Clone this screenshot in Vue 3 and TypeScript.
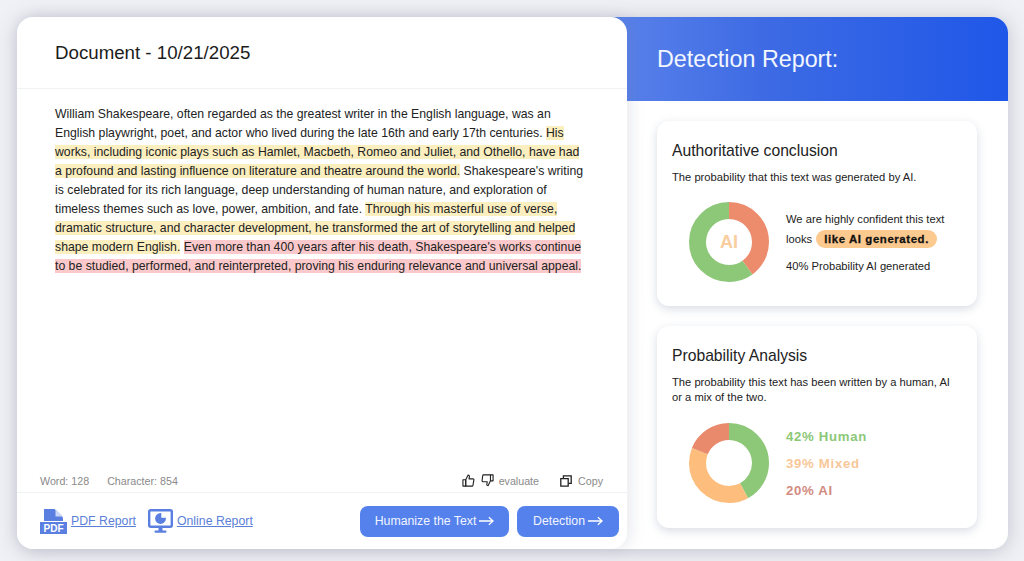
<script setup lang="ts">
import { computed } from "vue";

const radius = 31.5;
const circumference = 2 * Math.PI * radius;

const conclusionParts = [
  { color: "#ec8c6c", value: 40 },
  { color: "#8cc878", value: 60 },
];

const analysisParts = [
  { color: "#8cc878", value: 42 },
  { color: "#fdbd7c", value: 39 },
  { color: "#e98a6c", value: 19 },
];

const legend = [
  { label: "42% Human", color: "#8cc878" },
  { label: "39% Mixed", color: "#f8c798" },
  { label: "20% AI", color: "#d28b80" },
];

function toSegments(parts: { color: string; value: number }[]) {
  let used = 0;
  return parts.map((part) => {
    const length = (part.value / 100) * circumference;
    const segment = {
      color: part.color,
      dash: `${length} ${circumference - length}`,
      offset: -used,
    };
    used += length;
    return segment;
  });
}

const conclusionSegments = computed(() => toSegments(conclusionParts));
const analysisSegments = computed(() => toSegments(analysisParts));
</script>

<template>
  <div class="page">
    <div class="shell">
      <section class="document">
        <header class="doc-head">Document - 10/21/2025</header>
        <div class="doc-body">
          <p>
            William Shakespeare, often regarded as the greatest writer in the English language, was an English playwright, poet, and actor who lived during the late 16th and early 17th centuries.
            <span class="mark-yellow">His works, including iconic plays such as Hamlet, Macbeth, Romeo and Juliet, and Othello, have had a profound and lasting influence on literature and theatre around the world.</span>
            Shakespeare's writing is celebrated for its rich language, deep understanding of human nature, and exploration of timeless themes such as love, power, ambition, and fate.
            <span class="mark-yellow">Through his masterful use of verse, dramatic structure, and character development, he transformed the art of storytelling and helped shape modern English.</span>{{ " " }}<span class="mark-red">Even more than 400 years after his death, Shakespeare's works continue to be studied, performed, and reinterpreted, proving his enduring relevance and universal appeal.</span>
          </p>
        </div>
        <div class="doc-stats">
          <div class="counts">
            <span>Word: 128</span>
            <span>Character: 854</span>
          </div>
          <div class="actions">
            <svg viewBox="0 0 14 14" width="13" height="13" fill="none" stroke="#222" stroke-width="1.2" stroke-linejoin="round">
              <path d="M4 6.2 6.6 1.2c1 0 1.6.7 1.4 1.7L7.6 5.2h4.2c.7 0 1.1.6 1 1.2l-1 5.8c-.1.5-.5.8-1 .8H4z" />
              <path d="M1 6.2h3V13H1z" />
            </svg>
            <svg class="thumb-down" viewBox="0 0 14 14" width="13" height="13" fill="none" stroke="#222" stroke-width="1.2" stroke-linejoin="round">
              <path d="M2.6 1h7.6v6.4L7.6 12.6c-1 0-1.5-.7-1.3-1.6l.4-2.6H2.4c-.8 0-1.4-.6-1.2-1.3l.6-5.2c.1-.5.4-.9.8-.9z" />
              <path d="M10.2 1H13v6.4h-2.8" />
            </svg>
            <span class="evaluate">evaluate</span>
            <svg class="copy-icon" viewBox="0 0 12 12" width="12" height="12" fill="none" stroke="#222" stroke-width="1.3">
              <path d="M.8 3.6h7.4V11.2H.8z" />
              <path d="M3.4 3.4V.8h7.8v7.6H8.4" />
            </svg>
            <span>Copy</span>
          </div>
        </div>
        <footer class="doc-foot">
          <div class="links">
            <a class="report-link">
              <svg viewBox="0 0 27 26" width="27" height="26">
                <path d="M4 1h10.5L23 9.5V13H4z" fill="#5b7fe0" />
                <path d="M15.5 1 23 8.5h-7.5z" fill="#c9d6f5" />
                <rect x="0" y="14" width="27" height="12" fill="#5b7fe0" />
                <text x="13.5" y="24" text-anchor="middle" class="pdf-text">PDF</text>
              </svg>
              <span>PDF Report</span>
            </a>
            <a class="report-link">
              <svg viewBox="0 0 25 24" width="25" height="24">
                <rect x="1.2" y="1.2" width="22.6" height="16.6" rx="1.5" fill="none" stroke="#5b7fe0" stroke-width="2.4" />
                <circle cx="12.5" cy="9.5" r="5.4" fill="#5b7fe0" />
                <path d="M13.3 8.7V3.9a5 5 0 0 1 4.8 4.8z" fill="#fff" />
                <rect x="10.5" y="19" width="4" height="3" fill="#5b7fe0" />
                <rect x="6.5" y="21.6" width="12" height="2.2" rx="1" fill="#5b7fe0" />
              </svg>
              <span>Online Report</span>
            </a>
          </div>
          <div class="buttons">
            <button class="cta humanize">
              Humanize the Text
              <svg viewBox="0 0 16 10" width="15" height="10" fill="none" stroke="#fff" stroke-width="1.4"><path d="M0 5h15M10.5 1 15 5l-4.5 4" /></svg>
            </button>
            <button class="cta detection">
              Detection
              <svg viewBox="0 0 16 10" width="15" height="10" fill="none" stroke="#fff" stroke-width="1.4"><path d="M0 5h15M10.5 1 15 5l-4.5 4" /></svg>
            </button>
          </div>
        </footer>
      </section>

      <aside class="report">
        <header class="report-head">Detection Report:</header>
        <div class="report-body">
          <article class="card card-conclusion">
            <h2>Authoritative conclusion</h2>
            <p class="card-desc">The probability that this text was generated by AI.</p>
            <div class="card-row">
              <div class="donut">
                <svg viewBox="0 0 80 80" width="80" height="80">
                  <circle
                    v-for="seg in conclusionSegments"
                    :key="seg.color"
                    cx="40"
                    cy="40"
                    :r="radius"
                    fill="none"
                    :stroke="seg.color"
                    stroke-width="17"
                    :stroke-dasharray="seg.dash"
                    :stroke-dashoffset="seg.offset"
                    transform="rotate(-90 40 40)"
                  />
                </svg>
                <span class="donut-label">AI</span>
              </div>
              <div class="verdict">
                <p>We are highly confident this text</p>
                <p class="verdict-looks">looks <span class="pill">like AI generated.</span></p>
                <p class="verdict-prob">40% Probability AI generated</p>
              </div>
            </div>
          </article>

          <article class="card card-analysis">
            <h2>Probability Analysis</h2>
            <p class="card-desc">The probability this text has been written by a human, AI or a mix of the two.</p>
            <div class="card-row">
              <div class="donut">
                <svg viewBox="0 0 80 80" width="80" height="80">
                  <circle
                    v-for="seg in analysisSegments"
                    :key="seg.color"
                    cx="40"
                    cy="40"
                    :r="radius"
                    fill="none"
                    :stroke="seg.color"
                    stroke-width="17"
                    :stroke-dasharray="seg.dash"
                    :stroke-dashoffset="seg.offset"
                    transform="rotate(-90 40 40)"
                  />
                </svg>
              </div>
              <ul class="legend">
                <li v-for="item in legend" :key="item.label" :style="{ color: item.color }">{{ item.label }}</li>
              </ul>
            </div>
          </article>
        </div>
      </aside>
    </div>
  </div>
</template>

<style>
html,
body {
  margin: 0;
  background: #eef0f6;
}
</style>

<style scoped>
.page {
  box-sizing: border-box;
  width: 1024px;
  height: 561px;
  padding: 17px 16px 12px 17px;
  background: #f0f1f6;
  font-family: "Liberation Sans", Arial, sans-serif;
  color: #222;
  overflow: hidden;
}

.shell {
  display: flex;
  height: 532px;
  border-radius: 16px;
  background: #fff;
  box-shadow: 0 2px 20px rgba(100, 105, 125, 0.34);
}

.document {
  position: relative;
  z-index: 1;
  display: flex;
  flex-direction: column;
  width: 610px;
  flex: none;
  background: #fff;
  border-radius: 16px;
  box-shadow: 5px 0 14px rgba(110, 120, 150, 0.14);
}

.doc-head {
  height: 72px;
  box-sizing: border-box;
  padding: 26px 38px 0;
  font-size: 18.7px;
  line-height: 20px;
  color: #1c1c1c;
  border-bottom: 1px solid #f1f2f5;
}

.doc-body {
  flex: 1;
  padding: 16px 42px 0 38px;
}

.doc-body p {
  margin: 0;
  font-size: 12.25px;
  line-height: 19px;
  color: #222;
}

.mark-yellow {
  background: #fbeebf;
}

.mark-red {
  background: #fbc9cb;
}

.doc-stats {
  display: flex;
  justify-content: space-between;
  align-items: center;
  height: 25px;
  padding: 1px 24px 0 23px;
  box-sizing: border-box;
  font-size: 10.7px;
  color: #8a8a8a;
  border-bottom: 1px solid #f1f2f5;
}

.counts {
  display: flex;
  gap: 18px;
}

.actions {
  display: flex;
  align-items: center;
}

.thumb-down {
  margin-left: 6px;
}

.evaluate {
  margin-left: 5px;
  margin-right: 21px;
}

.copy-icon {
  margin-right: 6px;
}

.doc-foot {
  display: flex;
  justify-content: space-between;
  align-items: center;
  height: 56px;
  padding: 0 8px 0 23px;
}

.links {
  display: flex;
  align-items: center;
  gap: 12px;
}

.report-link {
  display: flex;
  align-items: center;
  gap: 4px;
  font-size: 12.3px;
  color: #5b7fd8;
}

.report-link span {
  text-decoration: underline;
}

.pdf-text {
  font-family: "Liberation Sans", Arial, sans-serif;
  font-size: 10px;
  font-weight: 700;
  fill: #fff;
}

.buttons {
  display: flex;
  gap: 8px;
}

.cta {
  display: flex;
  align-items: center;
  justify-content: center;
  gap: 3px;
  height: 31px;
  padding: 0;
  border: none;
  border-radius: 8px;
  background: #5581ec;
  color: #f2f5ff;
  font-family: inherit;
  font-size: 12.3px;
}

.humanize {
  width: 149px;
}

.detection {
  width: 102px;
}

.report {
  display: flex;
  flex-direction: column;
  flex: 1;
  min-width: 0;
  margin-left: -16px;
}

.report-head {
  box-sizing: border-box;
  height: 84px;
  padding: 28px 30px 0 46px;
  font-size: 23.3px;
  line-height: 28px;
  color: #f2f6ff;
  background: linear-gradient(90deg, #5a82ea 0%, #3e6be4 38%, #1f57e8 100%);
  border-radius: 0 16px 0 0;
}

.report-body {
  display: flex;
  flex-direction: column;
  gap: 20px;
  padding: 20px 31px 0 46px;
}

.card {
  box-sizing: border-box;
  padding: 21px 15px 0;
  border-radius: 12px;
  background: #fff;
  box-shadow: 0 3px 10px rgba(120, 130, 160, 0.28);
}

.card-conclusion {
  height: 185px;
}

.card-analysis {
  height: 202px;
}

.card h2 {
  margin: 0;
  font-size: 15.7px;
  font-weight: 400;
  line-height: 18px;
  color: #222;
}

.card-desc {
  margin: 10px 0 0;
  font-size: 11.2px;
  line-height: 15px;
  color: #222;
}

.card-row {
  display: flex;
  align-items: center;
  gap: 17px;
  margin-top: 17px;
  padding-left: 17px;
}

.card-analysis .card-row {
  margin-top: 18px;
}

.donut {
  position: relative;
  width: 80px;
  height: 80px;
  flex: none;
}

.donut svg {
  display: block;
}

.donut-label {
  position: absolute;
  inset: 0;
  display: flex;
  align-items: center;
  justify-content: center;
  font-size: 18px;
  font-weight: 700;
  color: #f8cda0;
}

.verdict p {
  margin: 0;
  font-size: 11.2px;
  line-height: 14px;
  color: #222;
}

.verdict .verdict-looks {
  margin-top: 4px;
}

.verdict .verdict-prob {
  margin-top: 11px;
}

.pill {
  display: inline-block;
  margin-left: 1px;
  padding: 0 8px;
  border-radius: 9px;
  background: #fcc98f;
  color: #111;
  font-size: 11.4px;
  font-weight: 700;
  line-height: 18px;
  letter-spacing: 0.6px;
  -webkit-text-stroke: 0.3px #111;
}

.legend {
  display: flex;
  flex-direction: column;
  gap: 13px;
  margin: 0;
  padding: 2px 0 0;
  list-style: none;
  font-size: 13.2px;
  line-height: 14px;
  font-weight: 700;
  letter-spacing: 0.7px;
}
</style>
